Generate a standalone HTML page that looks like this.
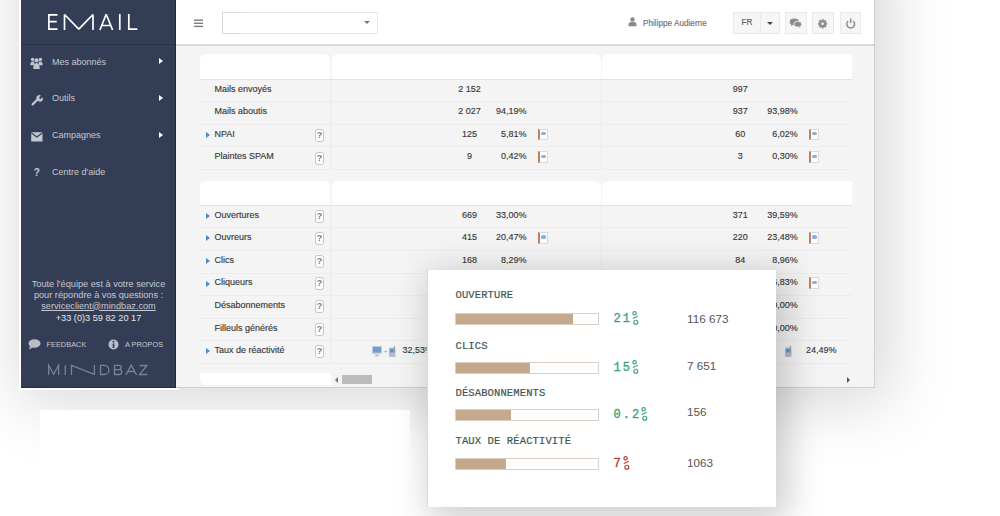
<!DOCTYPE html><html><head><meta charset="utf-8"><style>
*{margin:0;padding:0;box-sizing:border-box}
html,body{width:1000px;height:516px;overflow:hidden;background:#fff;font-family:"Liberation Sans",sans-serif}
div,span,svg{position:absolute}
.t{white-space:nowrap;font-size:9px;color:#333;line-height:12px;-webkit-text-stroke:0.12px #333}
.mi{white-space:nowrap;font-size:9px;color:#c5c9d2;line-height:12px}
.ft{white-space:nowrap;font-size:9.2px;color:#c5c9d2;line-height:11px;text-align:center;width:155px;left:21px}
.hc{background:#fff;border-radius:6px 6px 0 0}
.ln{height:1px;background:#ececec}
.q{width:9px;height:13px;border:1px solid #c4c4c4;border-radius:2.5px;background:#fff;font-size:9px;font-weight:bold;color:#7a7a7a;text-align:center;line-height:11.5px}
.tri{width:0;height:0;border-left:4px solid #4a8ad0;border-top:3px solid transparent;border-bottom:3px solid transparent}
.num{width:60px;text-align:center}
.pct{width:60px;text-align:right}
.bk{width:10px;height:11.5px;background:#fdfdfd;border:1px solid #dadada;border-left:2.5px solid #c0805e}
.bk:after{content:"";position:absolute;left:1.5px;top:2.3px;width:5px;height:3.2px;background:#86b0de;border-radius:1.5px}
.lbl{font-family:"Liberation Mono",monospace;font-size:10.5px;color:#3d5753;letter-spacing:0.12px;-webkit-text-stroke:0.2px #3d5753;white-space:nowrap;line-height:12px}
.bar{width:144px;height:12px;border:1px solid #dccfc2;background:#fff}
.bar i{position:absolute;left:0;top:0;bottom:0;background:#c4a98c}
.pc{font-family:"Liberation Mono",monospace;font-size:12px;letter-spacing:2px;color:#3aa57a;white-space:nowrap;line-height:16px}
.vl{font-size:11.7px;color:#555;white-space:nowrap;line-height:14px}
.btn{height:21.5px;background:#f6f6f6;border:1px solid #e9e9e9}
</style></head><body>
<div style="left:21px;top:-60px;width:854px;height:448px;box-shadow:6.5px 7.5px 60px 8.5px rgba(0,0,0,0.152)"></div>
<div style="left:19px;top:0;width:160px;height:390px;background:#fff"></div>
<div style="left:21px;top:0;width:854px;height:388px;background:#f4f4f4;border-right:1px solid #cfcfcf;border-bottom:1px solid #cfcfcf"></div>
<div style="left:176px;top:0;width:698px;height:46px;background:#fff;border-bottom:2px solid #d8d8d8"></div>
<div style="left:21px;top:0;width:155px;height:388px;background:#333d55;border-right:1px solid #212a3f;border-bottom:1px solid #252d44"></div>
<div style="left:21px;top:44px;width:154px;height:1px;background:#29314a"></div>
<svg style="left:0;top:0" width="180" height="44" viewBox="0 0 180 44"><g fill="none" stroke="#fff" stroke-width="1.7" stroke-linecap="butt" stroke-linejoin="miter">
<path d="M57.5 14.85H48.85V29.15H57.5M48.85 21.7H56.7"/>
<path d="M64.5 30V14.5L78.8 29.2L93 14.5V30" stroke-linejoin="bevel"/>
<path d="M99.9 30L106.2 14.2L112.6 30M101.9 25.5H110.6" stroke-linejoin="bevel"/>
<path d="M119.8 14V30"/>
<path d="M128.8 14V29.2H137.3"/>
</g></svg>
<span class="mi" style="left:52px;top:55.6px">Mes abonnés</span>
<div style="left:159px;top:58.1px;width:0;height:0;border-left:4.5px solid #fff;border-top:3.5px solid transparent;border-bottom:3.5px solid transparent"></div>
<span class="mi" style="left:52px;top:92.0px">Outils</span>
<div style="left:159px;top:94.5px;width:0;height:0;border-left:4.5px solid #fff;border-top:3.5px solid transparent;border-bottom:3.5px solid transparent"></div>
<span class="mi" style="left:52px;top:129.0px">Campagnes</span>
<div style="left:159px;top:131.5px;width:0;height:0;border-left:4.5px solid #fff;border-top:3.5px solid transparent;border-bottom:3.5px solid transparent"></div>
<span class="mi" style="left:52px;top:165.7px">Centre d'aide</span>
<svg style="left:30px;top:56.5px" width="13" height="13" viewBox="0 0 13 13" fill="#c0c4cc">
<circle cx="2.6" cy="2.4" r="1.7"/><circle cx="10.4" cy="2.4" r="1.7"/><circle cx="6.5" cy="3.3" r="2.1"/>
<path d="M0.3 8.2C0.3 5.6 1.3 4.6 2.6 4.6S4.4 5 4.4 5.5V8.2z"/><path d="M12.7 8.2C12.7 5.6 11.7 4.6 10.4 4.6S8.6 5 8.6 5.5V8.2z"/>
<path d="M3.2 12C3.2 8.2 4.5 6 6.5 6S9.8 8.2 9.8 12z"/></svg>
<svg style="left:30.5px;top:94px" width="12" height="12" viewBox="0 0 12 12">
<path d="M1.6 10.4L6.2 5.8" stroke="#c0c4cc" stroke-width="2.2" stroke-linecap="round"/>
<path d="M5.5 5.2a3 3 0 0 1 4.4-3.6l-1.8 1.8 .4 1.2 1.2.4 1.8-1.8a3 3 0 0 1-3.6 4.4z" fill="#c0c4cc"/></svg>
<svg style="left:30.5px;top:131.5px" width="12" height="10" viewBox="0 0 12 10">
<rect x="0.2" y="0.2" width="11.3" height="9.3" fill="#c3c7ce"/><path d="M0.2 0.8L5.85 5L11.5 0.8" stroke="#333d55" stroke-width="1.1" fill="none"/></svg>
<span style="left:33.8px;top:167px;font-size:10px;font-weight:bold;color:#c5c9d2;line-height:12px">?</span>
<span class="ft" style="top:278.5px">Toute l'équipe est à votre service</span>
<span class="ft" style="top:289.7px">pour répondre à vos questions :</span>
<span class="ft" style="top:300.5px;text-decoration:underline">serviceclient@mindbaz.com</span>
<span class="ft" style="top:312.7px;color:#e4e6ea">+33 (0)3 59 82 20 17</span>
<svg style="left:28px;top:339px" width="13" height="11" viewBox="0 0 13 11"><ellipse cx="6.5" cy="4.5" rx="6" ry="4.2" fill="#b9bdc6"/><path d="M2 7L1 10.5L5.5 8z" fill="#b9bdc6"/></svg>
<span class="mi" style="left:46.5px;top:338.5px;font-size:7.4px">FEEDBACK</span>
<svg style="left:107.5px;top:339px" width="11" height="11" viewBox="0 0 11 11"><circle cx="5.5" cy="5.5" r="5" fill="#b9bdc6"/><rect x="4.7" y="4.5" width="1.7" height="4.5" fill="#333d55"/><circle cx="5.5" cy="2.8" r="0.95" fill="#333d55"/></svg>
<span class="mi" style="left:125px;top:338.5px;font-size:7.4px">A PROPOS</span>
<svg style="left:40px;top:360px" width="115" height="20" viewBox="40 360 115 20"><g fill="none" stroke="#7a8296" stroke-width="1.3">
<path d="M48.6 375V365.2L53.6 374.2L58.6 365.2V375"/>
<path d="M65.3 365.2V375"/>
<path d="M71.5 375V365.5L94.4 374.4M94.4 365V375"/>
<path d="M100.5 365.3V374.5H104.3A4.6 4.6 0 0 0 108.9 369.9A4.6 4.6 0 0 0 104.3 365.3Z"/>
<path d="M114.5 365.3V374.5H119.4A2.4 2.4 0 0 0 119.4 369.7H114.5M114.5 365.3H118.9A2.2 2.2 0 0 1 118.9 369.7"/>
<path d="M125.8 375L131.2 365.2L136.6 375M127.8 371.5H134.6"/>
<path d="M139.5 365.5H147L139.5 374.5H147.3"/>
</g></svg>
<svg style="left:192px;top:17px" width="14" height="12"><g fill="#7b7b7b"><rect x="2" y="2.5" width="9" height="1.4"/><rect x="2" y="5.6" width="9" height="1.4"/><rect x="2" y="8.7" width="9" height="1.4"/></g></svg>
<div style="left:222px;top:12px;width:155.5px;height:21.5px;border:1px solid #e6e6e6;background:#fff"></div>
<div style="left:222px;top:12px;width:20px;height:21.5px;border:1px solid #d9d9d9;border-right:0"></div>
<div style="left:364px;top:20.5px;width:0;height:0;border-top:3.5px solid #777;border-left:3.5px solid transparent;border-right:3.5px solid transparent"></div>
<svg style="left:627.5px;top:17px" width="9" height="10" viewBox="0 0 9 10" fill="#8a8a8a"><circle cx="4.5" cy="2.4" r="2.2"/><path d="M0.5 9.3V7.4c0-1.8 1.4-2.6 4-2.6s4 .8 4 2.6v1.9z"/></svg>
<span class="t" style="left:643px;top:17.5px;font-size:8.2px;color:#707070;-webkit-text-stroke:0.15px #707070">Philippe Audierne</span>
<div class="btn" style="left:733px;top:12px;width:47px"></div>
<div style="left:760px;top:13px;width:1px;height:19px;background:#e9e9e9"></div>
<span class="t" style="left:741.5px;top:16.8px;font-size:8.2px;color:#666">FR</span>
<div style="left:766.5px;top:22px;width:0;height:0;border-top:3px solid #444;border-left:3.5px solid transparent;border-right:3.5px solid transparent"></div>
<div class="btn" style="left:785px;top:12px;width:21.5px"></div>
<div class="btn" style="left:812px;top:12px;width:21.5px"></div>
<div class="btn" style="left:839.5px;top:12px;width:21.5px"></div>
<svg style="left:789px;top:18px" width="14" height="11" viewBox="0 0 14 11" fill="#8c8c8c"><ellipse cx="5.3" cy="3.8" rx="4.6" ry="3.2"/><path d="M2.5 6L1.8 8.3L5 6.8z"/><ellipse cx="8.8" cy="6.2" rx="4" ry="2.9" stroke="#f6f6f6" stroke-width="0.8"/><path d="M10.5 8.5L12 10.3L9.5 9z"/></svg>
<svg style="left:817px;top:18.5px" width="12" height="10" viewBox="0 0 12 10" overflow="visible"><g fill="#8c8c8c" transform="translate(5.6 4.8)">
<rect x="-1.1" y="-4.6" width="2.2" height="9.2"/><rect x="-1.1" y="-4.6" width="2.2" height="9.2" transform="rotate(45)"/><rect x="-1.1" y="-4.6" width="2.2" height="9.2" transform="rotate(90)"/><rect x="-1.1" y="-4.6" width="2.2" height="9.2" transform="rotate(135)"/>
<circle r="3.3"/></g><circle cx="5.6" cy="4.8" r="1.3" fill="#f6f6f6"/></svg>
<svg style="left:844.5px;top:18px" width="12" height="11" viewBox="0 0 12 11"><path d="M3.2 3A3.9 3.9 0 1 0 8.2 3" fill="none" stroke="#8c8c8c" stroke-width="1.5"/><path d="M5.7 0.5V5" stroke="#8c8c8c" stroke-width="1.5"/></svg>
<div class="hc" style="left:200px;top:54px;width:130px;height:24.5px"></div>
<div class="hc" style="left:331.5px;top:54px;width:269.5px;height:24.5px"></div>
<div class="hc" style="left:602px;top:54px;width:250px;height:24.5px;border-top-right-radius:0"></div>
<div class="ln" style="left:200px;top:78.5px;width:652px;background:#e2e2e2"></div>
<div class="ln" style="left:200px;top:101.1px;width:652px"></div>
<div class="ln" style="left:200px;top:123.7px;width:652px"></div>
<div class="ln" style="left:200px;top:146.3px;width:652px"></div>
<div class="ln" style="left:200px;top:168.9px;width:652px"></div>
<div style="left:330px;top:78.5px;width:1px;height:90.4px;background:#eaeaea"></div>
<div style="left:601px;top:78.5px;width:1px;height:90.4px;background:#eaeaea"></div>
<span class="t" style="left:214.5px;top:83.1px">Mails envoyés</span>
<span class="t num" style="left:439.5px;top:83.1px">2 152</span>
<span class="t num" style="left:710.3px;top:83.1px">997</span>
<span class="t" style="left:214.5px;top:105.3px">Mails aboutis</span>
<span class="t num" style="left:439.5px;top:105.3px">2 027</span>
<span class="t pct" style="left:466.6px;top:105.3px">94,19%</span>
<span class="t num" style="left:710.3px;top:105.3px">937</span>
<span class="t pct" style="left:737.7px;top:105.3px">93,98%</span>
<div class="tri" style="left:206.2px;top:131.6px"></div>
<span class="t" style="left:214.5px;top:127.6px">NPAI</span>
<div class="q" style="left:315px;top:129.2px">?</div>
<span class="t num" style="left:439.5px;top:127.6px">125</span>
<span class="t pct" style="left:466.6px;top:127.6px">5,81%</span>
<div class="bk" style="left:537.5px;top:128.6px"></div>
<span class="t num" style="left:710.3px;top:127.6px">60</span>
<span class="t pct" style="left:737.7px;top:127.6px">6,02%</span>
<div class="bk" style="left:808.5px;top:128.6px"></div>
<span class="t" style="left:214.5px;top:150.4px">Plaintes SPAM</span>
<div class="q" style="left:315px;top:151.8px">?</div>
<span class="t num" style="left:439.5px;top:150.4px">9</span>
<span class="t pct" style="left:466.6px;top:150.4px">0,42%</span>
<div class="bk" style="left:537.5px;top:151.4px"></div>
<span class="t num" style="left:710.3px;top:150.4px">3</span>
<span class="t pct" style="left:737.7px;top:150.4px">0,30%</span>
<div class="bk" style="left:808.5px;top:151.4px"></div>
<div class="hc" style="left:200px;top:180.5px;width:130px;height:24.5px"></div>
<div class="hc" style="left:331.5px;top:180.5px;width:269.5px;height:24.5px"></div>
<div class="hc" style="left:602px;top:180.5px;width:250px;height:24.5px;border-top-right-radius:0"></div>
<div class="ln" style="left:200px;top:204.8px;width:652px;background:#e2e2e2"></div>
<div class="ln" style="left:200px;top:227.4px;width:652px"></div>
<div class="ln" style="left:200px;top:250.0px;width:652px"></div>
<div class="ln" style="left:200px;top:272.6px;width:652px"></div>
<div class="ln" style="left:200px;top:295.2px;width:652px"></div>
<div class="ln" style="left:200px;top:317.8px;width:652px"></div>
<div class="ln" style="left:200px;top:340.4px;width:652px"></div>
<div class="ln" style="left:200px;top:363.0px;width:652px"></div>
<div style="left:330px;top:204.8px;width:1px;height:158.2px;background:#eaeaea"></div>
<div style="left:601px;top:204.8px;width:1px;height:158.2px;background:#eaeaea"></div>
<div class="tri" style="left:206.2px;top:212.7px"></div>
<span class="t" style="left:214.5px;top:208.6px">Ouvertures</span>
<div class="q" style="left:315px;top:209.5px">?</div>
<span class="t num" style="left:439.5px;top:208.6px">669</span>
<span class="t pct" style="left:466.6px;top:208.6px">33,00%</span>
<span class="t num" style="left:710.3px;top:208.6px">371</span>
<span class="t pct" style="left:737.7px;top:208.6px">39,59%</span>
<div class="tri" style="left:206.2px;top:235.3px"></div>
<span class="t" style="left:214.5px;top:231.2px">Ouvreurs</span>
<div class="q" style="left:315px;top:232.1px">?</div>
<span class="t num" style="left:439.5px;top:231.2px">415</span>
<span class="t pct" style="left:466.6px;top:231.2px">20,47%</span>
<div class="bk" style="left:537.5px;top:232.2px"></div>
<span class="t num" style="left:710.3px;top:231.2px">220</span>
<span class="t pct" style="left:737.7px;top:231.2px">23,48%</span>
<div class="bk" style="left:808.5px;top:232.2px"></div>
<div class="tri" style="left:206.2px;top:257.9px"></div>
<span class="t" style="left:214.5px;top:253.8px">Clics</span>
<div class="q" style="left:315px;top:254.7px">?</div>
<span class="t num" style="left:439.5px;top:253.8px">168</span>
<span class="t pct" style="left:466.6px;top:253.8px">8,29%</span>
<span class="t num" style="left:710.3px;top:253.8px">84</span>
<span class="t pct" style="left:737.7px;top:253.8px">8,96%</span>
<div class="tri" style="left:206.2px;top:280.5px"></div>
<span class="t" style="left:214.5px;top:276.4px">Cliqueurs</span>
<div class="q" style="left:315px;top:277.3px">?</div>
<span class="t num" style="left:439.5px;top:276.4px">82</span>
<span class="t pct" style="left:466.6px;top:276.4px">4,05%</span>
<div class="bk" style="left:537.5px;top:277.4px"></div>
<span class="t num" style="left:710.3px;top:276.4px">61</span>
<span class="t pct" style="left:737.7px;top:276.4px">6,83%</span>
<div class="bk" style="left:808.5px;top:277.4px"></div>
<span class="t" style="left:214.5px;top:299.0px">Désabonnements</span>
<div class="q" style="left:315px;top:299.9px">?</div>
<span class="t num" style="left:439.5px;top:299.0px">0</span>
<span class="t pct" style="left:466.6px;top:299.0px">0,00%</span>
<span class="t num" style="left:710.3px;top:299.0px">0</span>
<span class="t pct" style="left:737.7px;top:299.0px">0,00%</span>
<span class="t" style="left:214.5px;top:321.6px">Filleuls générés</span>
<div class="q" style="left:315px;top:322.5px">?</div>
<span class="t num" style="left:439.5px;top:321.6px">0</span>
<span class="t pct" style="left:466.6px;top:321.6px">0,00%</span>
<span class="t num" style="left:710.3px;top:321.6px">0</span>
<span class="t pct" style="left:737.7px;top:321.6px">0,00%</span>
<div class="tri" style="left:206.2px;top:348.3px"></div>
<span class="t" style="left:214.5px;top:344.2px">Taux de réactivité</span>
<div class="q" style="left:315px;top:345.1px">?</div>
<svg style="left:372px;top:346px" width="11" height="11" viewBox="0 0 11 11"><rect x="0" y="0" width="10" height="7.8" fill="#c6ccd4"/><rect x="1" y="1" width="8" height="5.6" fill="#6a9fd8"/><rect x="3" y="8.2" width="4" height="2.3" rx="1" fill="#c3c6ca"/></svg>
<span class="t" style="left:384px;top:345px;font-size:6px;color:#999;-webkit-text-stroke:0">+</span>
<svg style="left:389px;top:345.5px" width="7" height="11" viewBox="0 0 7 11"><rect x="0" y="1.5" width="6.5" height="9.5" rx="1.2" fill="#b8bcc2"/><rect x="1" y="3" width="4.5" height="3.5" fill="#5a9ad8"/><rect x="5" y="0" width="1" height="2" fill="#999"/></svg>
<span class="t" style="left:402.5px;top:344.2px">32,53%</span>
<svg style="left:785px;top:345.5px" width="7" height="11" viewBox="0 0 7 11"><rect x="0" y="1.5" width="6.5" height="9.5" rx="1.2" fill="#b8bcc2"/><rect x="1" y="3" width="4.5" height="3.5" fill="#5a9ad8"/><rect x="5" y="0" width="1" height="2" fill="#999"/></svg>
<span class="t" style="left:806px;top:344.2px">24,49%</span>
<div style="left:200px;top:373px;width:131px;height:12px;background:#fff;border-radius:0 0 0 6px"></div>
<div style="left:335px;top:376.5px;width:0;height:0;border-right:3px solid #777;border-top:3px solid transparent;border-bottom:3px solid transparent"></div>
<div style="left:342px;top:375px;width:30px;height:9px;background:#bcbcbc"></div>
<div style="left:846.5px;top:376.5px;width:0;height:0;border-left:3px solid #555;border-top:3px solid transparent;border-bottom:3px solid transparent"></div>
<div style="left:40px;top:410px;width:370px;height:106px;background:#fff"></div>
<div style="left:427px;top:270px;width:349px;height:237px;background:#fff;border-left:1px solid #d9d9d9;box-shadow:7px 8px 34px 5px rgba(0,0,0,0.2)"></div>
<span class="lbl" style="left:455.5px;top:289.4px">OUVERTURE</span>
<div class="bar" style="left:455px;top:312.5px"><i style="width:117.0px"></i></div>
<span class="pc" style="left:613.5px;top:311.0px;color:#3aa57a;-webkit-text-stroke:0.35px #3aa57a">21</span>
<svg style="left:632.1px;top:310.0px" width="8" height="16" viewBox="0 0 8 16"><g fill="none" stroke="#3aa57a" stroke-width="1.15"><circle cx="2.6" cy="3.3" r="1.7"/><circle cx="3.8" cy="12.2" r="2"/><path d="M0.8 8.6L5.8 6.3"/></g></svg>
<span class="vl" style="left:687px;top:311.5px">116 673</span>
<span class="lbl" style="left:455.5px;top:339.8px">CLICS</span>
<div class="bar" style="left:455px;top:362.0px"><i style="width:73.6px"></i></div>
<span class="pc" style="left:613.5px;top:360.0px;color:#3aa57a;-webkit-text-stroke:0.35px #3aa57a">15</span>
<svg style="left:632.1px;top:359.0px" width="8" height="16" viewBox="0 0 8 16"><g fill="none" stroke="#3aa57a" stroke-width="1.15"><circle cx="2.6" cy="3.3" r="1.7"/><circle cx="3.8" cy="12.2" r="2"/><path d="M0.8 8.6L5.8 6.3"/></g></svg>
<span class="vl" style="left:687px;top:359.2px">7 651</span>
<span class="lbl" style="left:455.5px;top:387.0px">DÉSABONNEMENTS</span>
<div class="bar" style="left:455px;top:408.5px"><i style="width:55.0px"></i></div>
<span class="pc" style="left:613.5px;top:407.0px;color:#3aa57a;-webkit-text-stroke:0.35px #3aa57a">0.2</span>
<svg style="left:641.3px;top:406.0px" width="8" height="16" viewBox="0 0 8 16"><g fill="none" stroke="#3aa57a" stroke-width="1.15"><circle cx="2.6" cy="3.3" r="1.7"/><circle cx="3.8" cy="12.2" r="2"/><path d="M0.8 8.6L5.8 6.3"/></g></svg>
<span class="vl" style="left:687px;top:404.5px">156</span>
<span class="lbl" style="left:455.5px;top:435.0px">TAUX DE RÉACTIVITÉ</span>
<div class="bar" style="left:455px;top:457.9px"><i style="width:50.0px"></i></div>
<span class="pc" style="left:613.5px;top:456.3px;color:#c0392f;-webkit-text-stroke:0.35px #c0392f">7</span>
<svg style="left:622.9px;top:455.3px" width="8" height="16" viewBox="0 0 8 16"><g fill="none" stroke="#c0392f" stroke-width="1.15"><circle cx="2.6" cy="3.3" r="1.7"/><circle cx="3.8" cy="12.2" r="2"/><path d="M0.8 8.6L5.8 6.3"/></g></svg>
<span class="vl" style="left:687px;top:456.4px">1063</span>
</body></html>
